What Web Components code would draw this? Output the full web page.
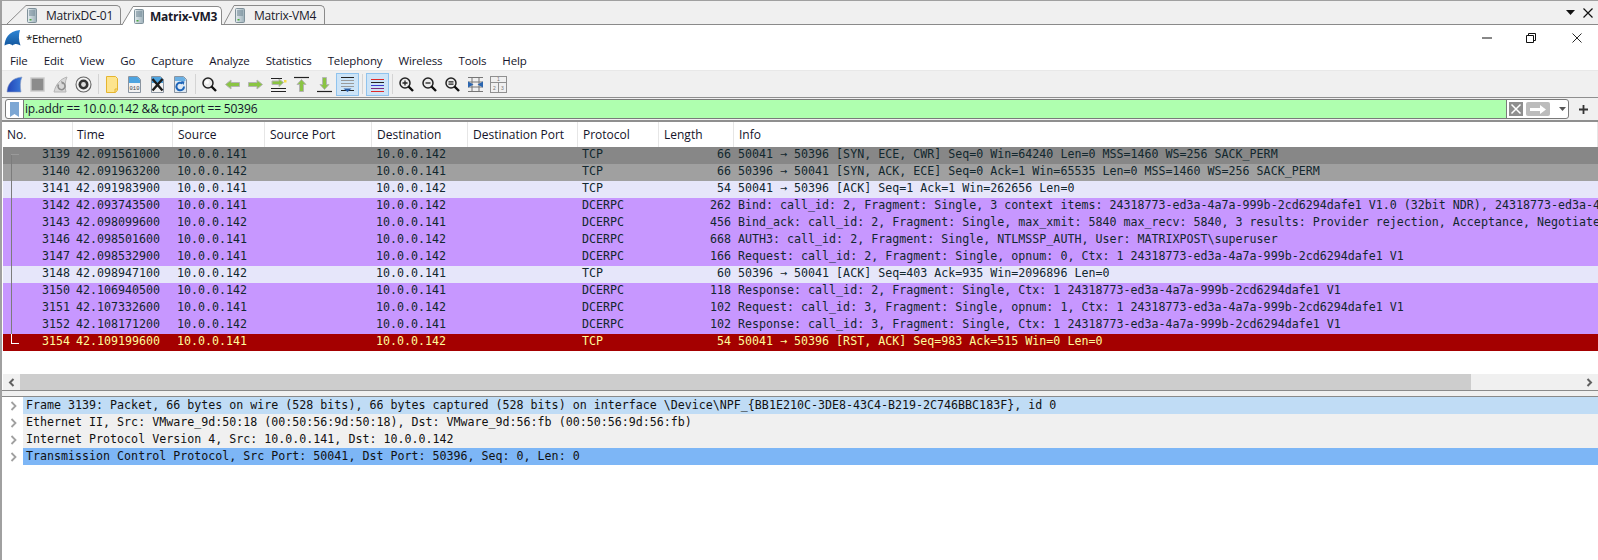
<!DOCTYPE html>
<html>
<head>
<meta charset="utf-8">
<style>
  html, body { margin: 0; height: 100%; background: #fff; overflow: hidden; }
  body { font: 12px "Open Sans", "Noto Sans", sans-serif; color: #111; }
</style>
</head>
<body>
<vm-tabs>
  <vm-tab slant="19" body="95" gap="9" after="1">MatrixDC-01</vm-tab>
  <vm-tab slant="11" body="89" gap="6" after="2" active>Matrix-VM3</vm-tab>
  <vm-tab slant="10" body="91" gap="9" after="0">Matrix-VM4</vm-tab>
</vm-tabs>
<ws-window>
  <ws-titlebar>*Ethernet0</ws-titlebar>
  <ws-menubar>
    <span>File</span><span>Edit</span><span>View</span><span>Go</span><span>Capture</span><span>Analyze</span>
    <span>Statistics</span><span>Telephony</span><span>Wireless</span><span>Tools</span><span>Help</span>
  </ws-menubar>
  <ws-toolbar></ws-toolbar>
  <ws-filter>ip.addr == 10.0.0.142 &amp;&amp; tcp.port == 50396</ws-filter>
  <ws-packet-list></ws-packet-list>
  <ws-scrollbar></ws-scrollbar>
  <ws-splitter></ws-splitter>
  <ws-details>
    <ws-detail tone="light">Frame 3139: Packet, 66 bytes on wire (528 bits), 66 bytes captured (528 bits) on interface \Device\NPF_{BB1E210C-3DE8-43C4-B219-2C746BBC183F}, id 0</ws-detail>
    <ws-detail>Ethernet II, Src: VMware_9d:50:18 (00:50:56:9d:50:18), Dst: VMware_9d:56:fb (00:50:56:9d:56:fb)</ws-detail>
    <ws-detail>Internet Protocol Version 4, Src: 10.0.0.141, Dst: 10.0.0.142</ws-detail>
    <ws-detail tone="strong">Transmission Control Protocol, Src Port: 50041, Dst Port: 50396, Seq: 0, Len: 0</ws-detail>
  </ws-details>
</ws-window>

<script>
const shadow = (el, html) => {
  el.attachShadow({ mode: 'open' }).innerHTML = html;
};

const MONO = '"DejaVu Sans Mono", "Liberation Mono", monospace';
const COLS = '70px 100px 92px 107px 96px 110px 81px 75px 1fr';

//Tabs
const SERVER_ICON = `<svg width="10" height="15" viewBox="0 0 10 15">
  <defs><linearGradient id="srv" x1="0" x2="1"><stop offset="0" stop-color="#e6edf0"/><stop offset="1" stop-color="#9db0b9"/></linearGradient></defs>
  <rect x=".5" y=".5" width="9" height="14" rx="1" fill="url(#srv)" stroke="#7f919a"/>
  <path d="M2 3h6M2 5h6M2 7h6" stroke="#6a8290"/><rect x="2.500" y="11" width="2" height="1.500" fill="#4aa83c"/>
</svg>`;

class VmTabs extends HTMLElement {
  constructor() {
    super();
    shadow(this, `<style>
      :host { display: flex; height: 23px; background: #f0f0f0;
        border-top: 1px solid #a0a0a0; border-bottom: 1px solid #8a8a8a; border-left: 2px solid #a0a0a0; padding-left: 5px; align-items: flex-end; }
      .end { margin-left: auto; display: flex; align-items: center; align-self: center; padding-right: 5px; gap: 8px; }
    </style><slot></slot>
    <div class="end">
      <svg width="9" height="5" viewBox="0 0 9 5"><path d="M0 0h9L4.500 5z" fill="#111"/></svg>
      <svg width="10" height="10" viewBox="0 0 10 10"><path d="M.5.500l9 9M9.500.5l-9 9" stroke="#111" stroke-width="1.200"/></svg>
    </div>`);
  }
}

class VmTab extends HTMLElement {
  constructor() {
    super();
    const active = this.hasAttribute('active');
    const s = +this.getAttribute('slant');
    const fill = active ? '#fff' : '#f0f0f0';
    shadow(this, `<style>
      :host { display: flex; height: 19px; margin-right: ${this.getAttribute('after')}px; position: relative; top: ${active ? 1 : 0}px; }
      .body { display: flex; align-items: center; gap: ${this.getAttribute('gap')}px; background: ${fill}; box-sizing: border-box;
        width: ${this.getAttribute('body')}px; letter-spacing: -.25px;
        border-top: 1px solid #8a8a8a; border-right: 1px solid #8a8a8a; border-top-right-radius: 5px;
        padding-left: 1px; font-weight: ${active ? 700 : 400}; color: #1a1a2a; white-space: nowrap; }
      svg.s { display: block; }
    </style>
    <svg class="s" width="${s}" height="19" viewBox="0 0 ${s} 19"><path d="M0 19L${s} 0V19z" fill="${fill}"/><path d="M0 19L${s} .5" stroke="#8a8a8a" fill="none"/></svg>
    <div class="body">${SERVER_ICON}<slot></slot></div>`);
  }
}

//Window shell
class WsWindow extends HTMLElement {
  constructor() {
    super();
    shadow(this, `<style>
      :host { display: block; border-left: 2px solid #a0a0a0; background: #fff; height: 535px; }
    </style><slot></slot>`);
  }
}

class WsTitlebar extends HTMLElement {
  constructor() {
    super();
    shadow(this, `<style>
      :host { display: flex; align-items: center; height: 25px; background: #fff; padding-left: 2px; gap: 5px; }
      .ctl { margin-left: auto; display: flex; align-items: center; }
      .ctl svg { display: block; margin: 0 16px; }
      .txt { color: #111; padding-top: 1px; font-size: 11.5px; letter-spacing: -.35px; }
    </style>
    <svg width="17" height="16" viewBox="0 0 16 16">
      <defs><linearGradient id="f" x1="0" y1="0" x2="0" y2="1"><stop offset="0" stop-color="#2e86d6"/><stop offset="1" stop-color="#14589f"/></linearGradient></defs>
      <path d="M0 15.500C.5 9 3.500 1 15.500 0 14 5 14 10 16 15.500 13 13.500 10 13.500 8 15.500 6 13.500 3 13.500 0 15.500z" fill="url(#f)"/>
    </svg>
    <span class="txt"><slot></slot></span>
    <div class="ctl">
      <svg width="10" height="2" viewBox="0 0 10 2"><path d="M0 1h10" stroke="#111"/></svg>
      <svg width="10" height="10" viewBox="0 0 10 10" style="margin:0 18px"><path d="M.5 2.500h7v7h-7zM2.500 2.500V.5h7v7h-2" fill="none" stroke="#111"/></svg>
      <svg width="10" height="10" viewBox="0 0 10 10" style="margin:0 16px 0 18px"><path d="M.5.500l9 9M9.500.5l-9 9" stroke="#111" stroke-width=".9"/></svg>
    </div>`);
  }
}

class WsMenubar extends HTMLElement {
  constructor() {
    super();
    shadow(this, `<style>
      :host { display: flex; align-items: center; height: 20px; background: #fff; border-bottom: 1px solid #e8e8e8; font-size: 11.5px; letter-spacing: -.13px; }
      ::slotted(span) { padding: 0 8px; color: #14142a; }
    </style><slot></slot>`);
  }
}

//Toolbar
const GREEN = '#8ac443';
const EDGE = '#b4b4b4';
const lens = inner => `<circle cx="7" cy="7" r="5" fill="#ececec" stroke="#222" stroke-width="1.500"/>${inner}<path d="M10.500 10.500l4.500 4.500" stroke="#111" stroke-width="2.400"/>`;
const docBlue = inner => `<path d="M1.500.5h9l3 3v13h-12z" fill="#f2f2f2" stroke="#8a94a0"/><path d="M2 1h8.500l2.500 2.500V7H2z" fill="#4ea4e0"/>${inner}`;
const ICONS = {
  shark: `<defs><linearGradient id="b" x1="0" x2="1"><stop offset="0" stop-color="#2244b8"/><stop offset="1" stop-color="#3a7ad8"/></linearGradient></defs><path d="M1 16C1.500 9 5 2 16 1c-2 4-2 10-1 15z" fill="url(#b)" stroke="#8a9ac0" stroke-width=".6"/>`,
  stop: `<rect x="2" y="2" width="13" height="13" fill="#8c8c8c" stroke="#c9c9c9" stroke-width="1.400"/>`,
  restart: `<path d="M2 16C3.500 9 8 3 15 1c-2 4-2.500 10-1 15z" fill="#d8d8d8" stroke="#b4b4b4"/><path d="M11 7a3.500 3.500 0 1 1-4.500 1.500" fill="none" stroke="#8e8e8e" stroke-width="1.600"/><path d="M9 5l3 1.500-2 2z" fill="#8e8e8e"/>`,
  options: `<circle cx="8.500" cy="8.500" r="7.500" fill="#f4f4f4" stroke="#666" stroke-width="1.100"/><circle cx="8.500" cy="8.500" r="5" fill="#333"/><circle cx="8.500" cy="8.500" r="2.400" fill="#ddd"/>`,
  folder: `<path d="M2.500.5h9l2 2v11.500l-2 2.500h-9z" fill="#fde48e" stroke="#e5b52f"/><path d="M11 16v-3h2.500" fill="none" stroke="#e5b52f"/>`,
  save: docBlue(`<text x="7.500" y="13.500" font-size="5.500" font-family="Liberation Mono" text-anchor="middle" fill="#444">010</text>`),
  close: docBlue(`<path d="M2.500 3l10 11.500M12.500 3L2.500 14.500" stroke="#1c1c1c" stroke-width="2.400"/>`),
  reload: `<path d="M1.500.5h9l3 3v13h-12z" fill="#dfeaf4" stroke="#8a94a0"/><path d="M2 1h8.500l2 2v2H2z" fill="#6ab0e4"/><path d="M11 10.500a3.800 3.800 0 1 1-1.500-3" fill="none" stroke="#1d64b8" stroke-width="2"/><path d="M8 5l3.500.5-1 3.500z" fill="#1d64b8"/>`,
  find: lens('<circle cx="6" cy="6" r="2" fill="#fff"/>'),
  back: `<path d="M1.500 8.500L7 4v2.500h8.500v4H7V13z" fill="${GREEN}" stroke="${EDGE}"/>`,
  forward: `<path d="M15.500 8.500L10 4v2.500H1.500v4H10V13z" fill="${GREEN}" stroke="${EDGE}"/>`,
  goto: `<path d="M1 12.500h15M1 15.500h15M1 2.500h11" stroke="#222"/><path d="M13.500 6.500L9 3v2H2v3.500h7v2z" fill="${GREEN}" stroke="${EDGE}"/><rect x="14" y="4" width="2.500" height="2.500" fill="#f4dc4a"/>`,
  first: `<path d="M1 1.500h15" stroke="#222" stroke-width="1.200"/><path d="M8.500 3.500L13 8.500h-2.500v7h-4v-7H4z" fill="${GREEN}" stroke="${EDGE}"/>`,
  last: `<path d="M1 15.500h15" stroke="#222" stroke-width="1.200"/><path d="M8.500 13.500L13 8.500h-2.500v-7h-4v7H4z" fill="${GREEN}" stroke="${EDGE}"/>`,
  scroll: `<path d="M2 1.500h13" stroke="#222"/><path d="M2 4.500h13M2 7.500h13M2 10.500h13" stroke="#9a9a9a"/><path d="M2 14.500h13" stroke="#222"/><path d="M4.500 12.500h8L8.500 16z" fill="#2b5fa8"/>`,
  colorize: `<path d="M2 3.500h13" stroke="#e02a2a"/><path d="M2 6.500h13" stroke="#222"/><path d="M2 9.500h13" stroke="#3a3ad0"/><path d="M2 12.500h13" stroke="#7a2a7a"/><path d="M2 15.500h13" stroke="#e02a2a"/>`,
  zoomin: lens('<path d="M4.500 7h5M7 4.500v5" stroke="#222" stroke-width="1.300"/>'),
  zoomout: lens('<path d="M4.500 7h5" stroke="#222" stroke-width="1.300"/>'),
  zoomreset: lens('<path d="M4.500 5.800h5M4.500 8.200h5" stroke="#222" stroke-width="1.200"/>'),
  resize: `<path d="M1 1.500h15M1 6h15M1 11h15M1 15.500h15" stroke="#777"/><path d="M5 1v15M12 1v15" stroke="#777"/><path d="M1 5.500l5.500 3-5.500 3zM16 5.500l-5.500 3 5.500 3z" fill="#2b66b0"/>`,
  layout: `<rect x=".5" y=".5" width="16" height="16" fill="#f0f0f0" stroke="#909090"/><path d="M.5 6.500h16M8.500 6.500v10" stroke="#909090"/><text x="8.500" y="5" font-size="5" text-anchor="middle" fill="#777" font-family="Liberation Sans">1</text><text x="4.500" y="13.500" font-size="5" text-anchor="middle" fill="#777" font-family="Liberation Sans">2</text><text x="12.500" y="13.500" font-size="5" text-anchor="middle" fill="#777" font-family="Liberation Sans">3</text>`,
};

class WsTool extends HTMLElement {
  constructor() {
    super();
    const on = this.hasAttribute('on');
    shadow(this, `<style>
      :host { display: flex; width: 23px; height: 23px; box-sizing: border-box; align-items: center; justify-content: center;
        ${on ? 'background: #cde4f7; border: 1px solid #8fc3ee;' : ''} }
      svg { display: block; }
    </style><svg width="17" height="17" viewBox="0 0 17 17">${ICONS[this.getAttribute('icon')]}</svg>`);
  }
}

class WsToolbar extends HTMLElement {
  constructor() {
    super();
    const groups = [
      ['shark', 'stop', 'restart', 'options'],
      ['folder', 'save', 'close', 'reload'],
      ['find', 'back', 'forward', 'goto', 'first', 'last', 'scroll'],
      ['colorize'],
      ['zoomin', 'zoomout', 'zoomreset', 'resize', 'layout'],
    ];
    const seps = ['6px', '5px', '7px', '6px'];
    let html = '';
    groups.forEach((g, i) => {
      g.forEach(n => {
        html += `<ws-tool icon="${n}"${n === 'scroll' || n === 'colorize' ? ' on' : ''}></ws-tool>`;
      });
      if (i < seps.length) html += `<i style="width:${seps[i]}"></i>`;
    });
    shadow(this, `<style>
      :host { display: flex; align-items: center; height: 26px; background: #f0f0f0; padding-left: 1px; }
      i { display: flex; justify-content: center; height: 20px; }
      i::after { content: ''; width: 1px; background: #d4d4d4; }
    </style>${html}`);
  }
}

//Display filter
class WsFilter extends HTMLElement {
  constructor() {
    super();
    shadow(this, `<style>
      :host { display: flex; align-items: center; height: 25px; box-sizing: border-box; background: #f0f0f0;
        border-top: 1px solid #8f8f8f; border-bottom: 2px solid #8f8f8f; padding: 0 0 0 3px; }
      .box { flex: 1; display: flex; height: 20px; box-sizing: border-box; border: 1px solid #7a7a7a; border-radius: 3px; background: #fff; overflow: hidden; }
      .mark { width: 17px; display: flex; align-items: center; justify-content: center; border-right: 1px solid #7a7a7a; }
      .text { flex: 1; background: #afffaf; padding-left: 1px; line-height: 17px; color: #14142a; letter-spacing: -.17px; }
      .btns { display: flex; align-items: center; width: 62px; border-left: 1px solid #7a7a7a; padding-left: 2px; gap: 3px; box-sizing: border-box; }
      .x { width: 14px; height: 14px; background: #8e8e8e; display: flex; }
      .go { width: 24px; height: 14px; background: #bcbcbc; border-radius: 2px; display: flex; align-items: center; justify-content: center; }
      .tri { margin-left: 6px; }
      .plus { width: 29px; display: flex; justify-content: center; }
    </style>
    <div class="box">
      <div class="mark"><svg width="9" height="15" viewBox="0 0 9 15"><path d="M0 0h9v15L4.500 12 0 15z" fill="#7da7d4"/></svg></div>
      <div class="text"><slot></slot></div>
      <div class="btns">
        <div class="x"><svg width="14" height="14" viewBox="0 0 14 14"><path d="M2.500 2.500l9 9M11.500 2.500l-9 9" stroke="#fff" stroke-width="1.500"/></svg></div>
        <div class="go"><svg width="16" height="9" viewBox="0 0 16 9"><path d="M0 3h10V0l6 4.500L10 9V6H0z" fill="#fff"/></svg></div>
        <svg class="tri" width="7" height="4" viewBox="0 0 7 4"><path d="M0 0h7L3.500 4z" fill="#555"/></svg>
      </div>
    </div>
    <div class="plus"><svg width="9" height="9" viewBox="0 0 9 9"><path d="M4.500 0v9M0 4.500h9" stroke="#333" stroke-width="1.800"/></svg></div>`);
  }
}

//Packet list
const C = {
  syn: ['#878787', '#12272e'],
  synack: ['#a0a0a0', '#12272e'],
  ack: ['#e6e6fa', '#12272e'],
  rpc: ['#c797ff', '#12272e'],
  rst: ['#a40000', '#fffc9c'],
};
const UUID = '24318773-ed3a-4a7a-999b-2cd6294dafe1';
const PACKETS = [
  ['3139', '42.091561000', '141', 'TCP', '66', '50041 → 50396 [SYN, ECE, CWR] Seq=0 Win=64240 Len=0 MSS=1460 WS=256 SACK_PERM', 'syn', 'first'],
  ['3140', '42.091963200', '142', 'TCP', '66', '50396 → 50041 [SYN, ACK, ECE] Seq=0 Ack=1 Win=65535 Len=0 MSS=1460 WS=256 SACK_PERM', 'synack'],
  ['3141', '42.091983900', '141', 'TCP', '54', '50041 → 50396 [ACK] Seq=1 Ack=1 Win=262656 Len=0', 'ack'],
  ['3142', '42.093743500', '141', 'DCERPC', '262', `Bind: call_id: 2, Fragment: Single, 3 context items: ${UUID} V1.0 (32bit NDR), 24318773-ed3a-4`, 'rpc'],
  ['3143', '42.098099600', '142', 'DCERPC', '456', 'Bind_ack: call_id: 2, Fragment: Single, max_xmit: 5840 max_recv: 5840, 3 results: Provider rejection, Acceptance, Negotiate', 'rpc'],
  ['3146', '42.098501600', '141', 'DCERPC', '668', 'AUTH3: call_id: 2, Fragment: Single, NTLMSSP_AUTH, User: MATRIXPOST\\superuser', 'rpc'],
  ['3147', '42.098532900', '141', 'DCERPC', '166', `Request: call_id: 2, Fragment: Single, opnum: 0, Ctx: 1 ${UUID} V1`, 'rpc'],
  ['3148', '42.098947100', '142', 'TCP', '60', '50396 → 50041 [ACK] Seq=403 Ack=935 Win=2096896 Len=0', 'ack'],
  ['3150', '42.106940500', '142', 'DCERPC', '118', `Response: call_id: 2, Fragment: Single, Ctx: 1 ${UUID} V1`, 'rpc'],
  ['3151', '42.107332600', '141', 'DCERPC', '102', `Request: call_id: 3, Fragment: Single, opnum: 1, Ctx: 1 ${UUID} V1`, 'rpc'],
  ['3152', '42.108171200', '142', 'DCERPC', '102', `Response: call_id: 3, Fragment: Single, Ctx: 1 ${UUID} V1`, 'rpc'],
  ['3154', '42.109199600', '141', 'TCP', '54', '50041 → 50396 [RST, ACK] Seq=983 Ack=515 Win=0 Len=0', 'rst', 'last'],
];

class WsPacketRow extends HTMLElement {
  set packet(p) {
    const [no, time, src, proto, len, info, kind, mark] = p;
    const dst = src === '141' ? '142' : '141';
    const [bg, fg] = C[kind];
    shadow(this, `<style>
      :host { display: grid; grid-template-columns: ${COLS}; height: 17px; background: ${bg}; color: ${fg};
        font: 11.65px/15px ${MONO}; white-space: pre; overflow: hidden; position: relative; }
      span { padding-left: 4px; overflow: hidden; }
      .t { padding-left: 3px; }
      .r { text-align: right; padding: 0 3px 0 0; }
      .info { overflow: visible; padding-left: 4px; }
      .line { position: absolute; left: 8px; top: ${mark === 'first' ? 7 : 0}px; height: ${mark ? 10 : 17}px; width: 1px; background: ${mark === 'last' ? '#ffffff' : '#7c7c7c'}; }
      .tick { position: absolute; left: 8px; top: ${mark === 'first' ? 7 : 9}px; width: 8px; height: 1px; background: ${mark === 'last' ? '#ffffff' : '#9a9a9a'}; }
    </style>
    <div class="line"></div>${mark ? '<div class="tick"></div>' : ''}
    <span class="r">${no}</span><span class="t">${time}</span><span>10.0.0.${src}</span><span></span><span>10.0.0.${dst}</span><span></span><span>${proto}</span><span class="r">${len}</span><span class="info">${info}</span>`);
  }
}

class WsPacketList extends HTMLElement {
  constructor() {
    super();
    const heads = ['No.', 'Time', 'Source', 'Source Port', 'Destination', 'Destination Port', 'Protocol', 'Length', 'Info'];
    shadow(this, `<style>
      :host { display: block; height: 252px; margin-left: 1px; overflow: hidden; background: #fff; }
      .head { display: grid; grid-template-columns: ${COLS}; height: 25px; align-items: stretch; color: #14142a; }
      .head div { display: flex; align-items: center; padding-left: 5px; border-right: 1px solid #e6e6e6; }
      .head div:nth-child(-n+2) { padding-left: 4px; }
    </style>
    <div class="head">${heads.map(h => `<div>${h}</div>`).join('')}</div>
    <div class="rows"></div>`);
    const rows = this.shadowRoot.querySelector('.rows');
    PACKETS.forEach(p => {
      const row = document.createElement('ws-packet-row');
      row.packet = p;
      rows.appendChild(row);
    });
  }
}

class WsScrollbar extends HTMLElement {
  constructor() {
    super();
    shadow(this, `<style>
      :host { display: flex; height: 16px; margin-left: 1px; background: #f0f0f0; align-items: stretch; }
      .btn { width: 17px; display: flex; align-items: center; justify-content: center; }
      .thumb { width: 1451px; background: #cdcdcd; }
      .rest { flex: 1; }
    </style>
    <div class="btn"><svg width="7" height="9" viewBox="0 0 7 9"><path d="M5.500 1L2 4.500 5.500 8" fill="none" stroke="#606060" stroke-width="2"/></svg></div>
    <div class="thumb"></div><div class="rest"></div>
    <div class="btn"><svg width="7" height="9" viewBox="0 0 7 9"><path d="M1.500 1L5 4.500 1.500 8" fill="none" stroke="#606060" stroke-width="2"/></svg></div>`);
  }
}

class WsSplitter extends HTMLElement {
  constructor() {
    super();
    shadow(this, `<style>
      :host { display: block; height: 7px; box-sizing: border-box; background: #f0f0f0; border-top: 1px solid #8a8a8a; border-bottom: 1px solid #8a8a8a; }
    </style>`);
  }
}

//Packet details
class WsDetails extends HTMLElement {
  constructor() {
    super();
    shadow(this, `<style>:host { display: block; background: #fff; }</style><slot></slot>`);
  }
}

class WsDetail extends HTMLElement {
  constructor() {
    super();
    const bg = { light: '#c0dcf5', strong: '#7db6f6' }[this.getAttribute('tone')] || '#f0f0f0';
    shadow(this, `<style>
      :host { display: flex; height: 17px; font: 11.65px/17px ${MONO}; color: #111; white-space: pre; }
      .arrow { width: 21px; display: flex; align-items: center; justify-content: center; padding-left: 1px; box-sizing: border-box; }
      .text { flex: 1; background: ${bg}; padding-left: 3px; }
    </style>
    <div class="arrow"><svg width="7" height="10" viewBox="0 0 7 10"><path d="M1.500 1L5.500 5 1.500 9" fill="none" stroke="#a0a0a0" stroke-width="1.800"/></svg></div>
    <div class="text"><slot></slot></div>`);
  }
}

customElements.define('vm-tabs', VmTabs);
customElements.define('vm-tab', VmTab);
customElements.define('ws-window', WsWindow);
customElements.define('ws-titlebar', WsTitlebar);
customElements.define('ws-menubar', WsMenubar);
customElements.define('ws-tool', WsTool);
customElements.define('ws-toolbar', WsToolbar);
customElements.define('ws-filter', WsFilter);
customElements.define('ws-packet-row', WsPacketRow);
customElements.define('ws-packet-list', WsPacketList);
customElements.define('ws-scrollbar', WsScrollbar);
customElements.define('ws-splitter', WsSplitter);
customElements.define('ws-details', WsDetails);
customElements.define('ws-detail', WsDetail);
</script>
</body>
</html>
